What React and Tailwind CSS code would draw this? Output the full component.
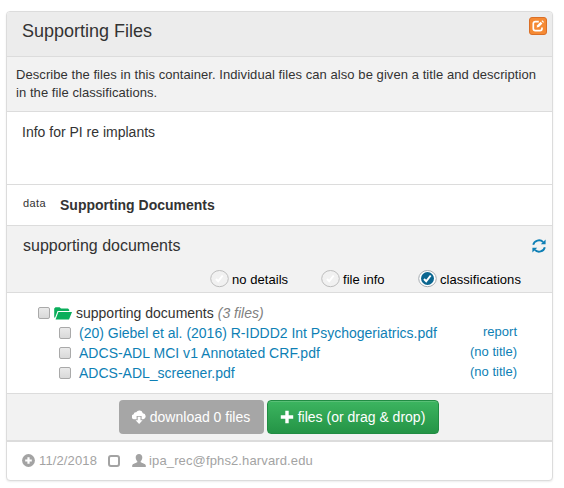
import React from 'react';

const EditIcon = () => (
  <svg className="h-[12px] w-[12px]" viewBox="0 0 12 12" fill="none">
    <path d="M6.8 1.6H3.4Q1.3 1.6 1.3 3.6V8.6Q1.3 10.7 3.4 10.7H8Q10 10.7 10 8.6V7.6" stroke="#fff" strokeWidth="1.7" />
    <path d="M4.6 7.6L5.2 5.2L8.6 1.8L10.4 3.6L7 7Z" fill="#fff" />
    <path d="M9.5 1L10.3 .2L12 1.9L11.2 2.7Z" fill="#fff" />
  </svg>
);

const RefreshIcon = () => (
  <svg className="h-[14px] w-[14px]" viewBox="0 0 14 14" fill="none">
    <path d="M1.2 5.8A5.9 5.7 0 0 1 11.2 3.1M12.8 8.2A5.9 5.7 0 0 1 2.8 10.9" stroke="#0e7fb5" strokeWidth="1.9" />
    <path d="M13.6 .5V5.3H8.8ZM.4 13.5V8.7H5.2Z" fill="#0e7fb5" />
  </svg>
);

const FolderIcon = () => (
  <svg className="h-[13px] w-[18px]" viewBox="0 0 18 13" fill="#0aae5b">
    <path d="M.2 10V1.5L1.5 .2H5.6L7 1.6H14L15.2 2.8V4H3.6L.9 11Z" />
    <path d="M4.4 5H18L15 12.6H1.6Z" />
  </svg>
);

const CloudIcon = () => (
  <svg className="h-[14px] w-[14px]" viewBox="0 0 14 14" fill="#fff">
    <path d="M2.7 9.3A2.6 2.6 0 0 1 1.7 4.2A2.2 2.2 0 0 1 4.2 2.2A3.6 3.6 0 0 1 10.8 3.2A3.1 3.1 0 0 1 11.3 9.3H9.6V6H4.6V9.3Z" />
    <path d="M5.7 6.8H8.5V10.2H10.6L7.1 14L3.6 10.2H5.7Z" />
  </svg>
);

const PlusIcon = () => (
  <svg className="h-[14px] w-[14px]" viewBox="0 0 14 14" fill="#fff">
    <path d="M5.3 .8H8.7V5.3H13.2V8.7H8.7V13.2H5.3V8.7H.8V5.3H5.3Z" />
  </svg>
);

const PlusCircleIcon = () => (
  <svg className="h-[13px] w-[13px]" viewBox="0 0 13 13">
    <circle cx="6.5" cy="6.5" r="6.4" fill="#a3a3a3" />
    <path d="M5.4 3.2H7.6V5.4H9.8V7.6H7.6V9.8H5.4V7.6H3.2V5.4H5.4Z" fill="#fff" />
  </svg>
);

const UserIcon = () => (
  <svg className="h-[13px] w-[14px]" viewBox="0 0 14 13" fill="#a3a3a3">
    <path d="M7 0C9 0 10.3 1.3 10.3 3.2C10.3 4.8 9.7 6.2 8.7 7.2V8.2C10.5 9.2 13.8 9.8 13.8 11.5V13H.2V11.5C.2 9.8 3.5 9.2 5.3 8.2V7.2C4.3 6.2 3.7 4.8 3.7 3.2C3.7 1.3 5 0 7 0Z" />
  </svg>
);

const Toggle = ({ on }) => (
  <svg className="h-[18px] w-[19px] shrink-0" viewBox="0 0 19 18" fill="none">
    <ellipse cx="9.5" cy="8.6" rx="8.8" ry="8.1" fill={on ? '#fff' : '#f1f1f1'} stroke={on ? '#a6acb1' : '#bdbdbd'} />
    {on && <circle cx="9.5" cy="8.5" r="6.5" fill="#0b6690" />}
    <path d="M6 9L8.2 11.3L12.7 5.5" stroke="#fff" strokeWidth="2" />
  </svg>
);

const Check = () => (
  <span className="block h-[12px] w-[12px] shrink-0 rounded-[2px] border border-[#a9a9a9] bg-linear-to-b from-[#eaeaea] to-[#d9d9d9]" />
);

const options = [
  { label: 'no details', width: 'w-[111px]' },
  { label: 'file info', width: 'w-[97px]' },
  { label: 'classifications', width: 'w-[104px]', on: true },
];

const files = [
  { name: '(20) Giebel et al. (2016) R-IDDD2 Int Psychogeriatrics.pdf', title: 'report' },
  { name: 'ADCS-ADL MCI v1 Annotated CRF.pdf', title: '(no title)', tracking: 'tracking-[0.03px]' },
  { name: 'ADCS-ADL_screener.pdf', title: '(no title)' },
];

export default function App() {
  return (
    <div className="h-[488px] w-[564px] overflow-hidden bg-white pt-[11px] pl-[6px] font-['Liberation_Sans',Arial,sans-serif] text-[14px] leading-5 whitespace-nowrap text-[#333]">
      <section className="flex h-[470px] w-[547px] flex-col overflow-hidden rounded-[4px] border border-[#dcdcdc] bg-white shadow-[0_1px_2px_rgba(0,0,0,0.08)]">
        <header className="flex h-[45px] shrink-0 justify-between border-b border-[#dcdcdc] bg-[#ececec] pt-[5px] pr-[5px] pl-[15px]">
          <h1 className="pt-[4px] text-[18px] leading-5">Supporting Files</h1>
          <button className="flex h-[18px] w-[18px] items-center justify-center rounded-[3px] border border-[#da6f27] bg-[#f58a34]">
            <EditIcon />
          </button>
        </header>
        <p className="h-[55px] shrink-0 border-b border-[#dcdcdc] bg-[#f2f2f2] pt-[9px] pl-[9px] text-[13px] leading-[18px] tracking-[0.065px]">
          Describe the files in this container. Individual files can also be given a title and description
          <br />
          in the file classifications.
        </p>
        <p className="h-[73px] shrink-0 border-b border-[#dcdcdc] pt-[10px] pl-[15px]">Info for PI re implants</p>
        <div className="flex h-[41px] shrink-0 border-b border-[#dcdcdc] pl-[16px]">
          <span className="w-[37px] pt-[8px] text-[11px] tracking-[0.4px]">data</span>
          <strong className="pt-[10px]">Supporting Documents</strong>
        </div>
        <div className="h-[67px] shrink-0 border-b border-[#dcdcdc] bg-[#f2f2f2]">
          <div className="flex h-[44px] justify-between pr-[6px] pl-[16px]">
            <h2 className="pt-[10px] text-[16px]">supporting documents</h2>
            <div className="pt-[13px]">
              <RefreshIcon />
            </div>
          </div>
          <div className="flex h-[18px] justify-end pr-[30px] text-[13px] tracking-[0.05px] text-black">
            {options.map((o) => (
              <label key={o.label} className={`flex items-center gap-[3px] ${o.width}`}>
                <Toggle on={o.on} />
                <span className="pt-[2px]">{o.label}</span>
              </label>
            ))}
          </div>
        </div>
        <div className="h-[101px] shrink-0 border-b border-[#dcdcdc] pt-[10px]">
          <div className="flex h-[20px] items-center pl-[31px]">
            <Check />
            <span className="ml-[4px]"><FolderIcon /></span>
            <span className="ml-[4px]">supporting documents</span>
            <em className="ml-[4px] text-[#808080]">(3 files)</em>
          </div>
          {files.map((f) => (
            <div key={f.name} className="flex h-[20px] items-center pr-[35px] pl-[52px] text-[#0e7fb5]">
              <Check />
              <span className={`ml-[8px] ${f.tracking ?? ''}`}>{f.name}</span>
              <span className="mb-[3px] ml-auto text-[13px]">{f.title}</span>
            </div>
          ))}
        </div>
        <div className="flex h-[48px] shrink-0 justify-center gap-[3px] border-b-2 border-[#dcdcdc] bg-[#f2f2f2] pt-[6px] pr-[2px] text-white">
          <button className="flex h-[34px] w-[145px] items-center justify-center gap-[4px] rounded-[4px] bg-[#a6a6a6]">
            <CloudIcon />
            <span>download 0 files</span>
          </button>
          <button className="flex h-[34px] w-[172px] items-center justify-center gap-[4px] rounded-[4px] border border-[#218c43] bg-linear-to-b from-[#3cb560] to-[#249446] shadow-[inset_0_1px_0_rgba(255,255,255,0.15)]">
            <PlusIcon />
            <span>files (or drag &amp; drop)</span>
          </button>
        </div>
        <footer className="flex h-[37px] items-center pl-[15px] text-[13px] tracking-[0.13px] text-[#a3a3a3]">
          <PlusCircleIcon />
          <span className="ml-[4px]">11/2/2018</span>
          <span className="ml-[11px] h-[12px] w-[12px] rounded-[3px] border-2 border-[#a3a3a3]" />
          <span className="ml-[12px]"><UserIcon /></span>
          <span className="ml-[3px]">ipa_rec@fphs2.harvard.edu</span>
        </footer>
      </section>
    </div>
  );
}
